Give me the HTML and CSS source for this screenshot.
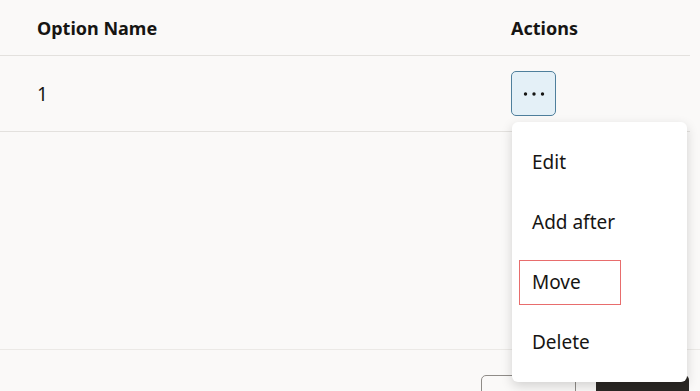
FILE: index.html
```html
<!DOCTYPE html>
<html lang="en">
<head>
  <meta charset="UTF-8">
  <meta name="viewport" content="width=device-width, initial-scale=1.0">
  <title>Options</title>
  <link rel="stylesheet" href="styles.css">
</head>
<body>
  <div class="page">
    <div class="table">
      <div class="row head">
        <div class="cell name">Option Name</div>
        <div class="cell">Actions</div>
      </div>
      <div class="row">
        <div class="cell name">1</div>
        <div class="cell actions">
          <button class="more" aria-label="More actions">
            <svg width="22" height="4" viewBox="0 0 22 4">
              <circle cx="2.5" cy="2" r="1.7" fill="#161513"/>
              <circle cx="11" cy="2" r="1.7" fill="#161513"/>
              <circle cx="19.5" cy="2" r="1.7" fill="#161513"/>
            </svg>
          </button>
          <ul class="menu">
            <li class="item">Edit</li>
            <li class="item">Add after</li>
            <li class="item"><span class="focus">Move</span></li>
            <li class="item">Delete</li>
          </ul>
        </div>
      </div>
    </div>

    <div class="empty"></div>

    <footer class="footer">
      <button class="btn outline" aria-label="Cancel"></button>
      <button class="btn solid" aria-label="Save"></button>
    </footer>
  </div>
</body>
</html>
```

FILE: styles.css
```css
/* General Styling */
body {
  margin: 0;
  padding: 0;
  background-color: #faf9f8;
  color: #161513;
  font-family: 'Noto Sans', 'Open Sans', sans-serif;
  overflow: hidden;
}

.page {
  width: 700px;
}

/* Table */
.table {
  width: 690px;
}

.row {
  display: grid;
  grid-template-columns: 511px 1fr;
  align-items: center;
  height: 75px;
  border-bottom: 1px solid #e3e1de;
  font-size: 19px;
}

.row.head {
  height: 55px;
  font-size: 18px;
  font-weight: 700;
}

.cell.name {
  padding-left: 37px;
}

.actions {
  position: relative;
}

/* Overflow button */
.more {
  display: flex;
  align-items: center;
  justify-content: center;
  width: 45px;
  height: 45px;
  padding: 0;
  background: #e4f0f7;
  border: 1px solid #4f7f9c;
  border-radius: 5px;
  cursor: pointer;
}

/* Popup menu */
.menu {
  position: absolute;
  left: 1px;
  top: 51px;
  width: 175px;
  margin: 0;
  padding: 10px 0;
  list-style: none;
  background: #fff;
  border-radius: 6px;
  box-shadow: 0 4px 12px rgba(0, 0, 0, 0.16);
  z-index: 2;
}

.item {
  display: flex;
  align-items: center;
  height: 60px;
  padding-left: 7px;
  font-size: 19px;
}

.item::before {
  content: '';
  width: 13px;
}

.focus {
  display: flex;
  align-items: center;
  box-sizing: border-box;
  width: 102px;
  height: 45px;
  margin-left: -13px;
  padding-left: 12px;
  border: 1.5px solid #e86d6d;
}

/* Empty area */
.empty {
  height: 217px;
  border-bottom: 1px solid #ebe9e6;
}

/* Footer */
.footer {
  display: flex;
  gap: 20px;
  padding: 25px 0 0 481px;
}

.btn {
  height: 44px;
  border-radius: 5px;
  cursor: pointer;
}

.btn.outline {
  width: 95px;
  background: transparent;
  border: 1px solid #8f8c88;
}

.btn.solid {
  width: 93px;
  background: #2b2825;
  border: none;
}
```
